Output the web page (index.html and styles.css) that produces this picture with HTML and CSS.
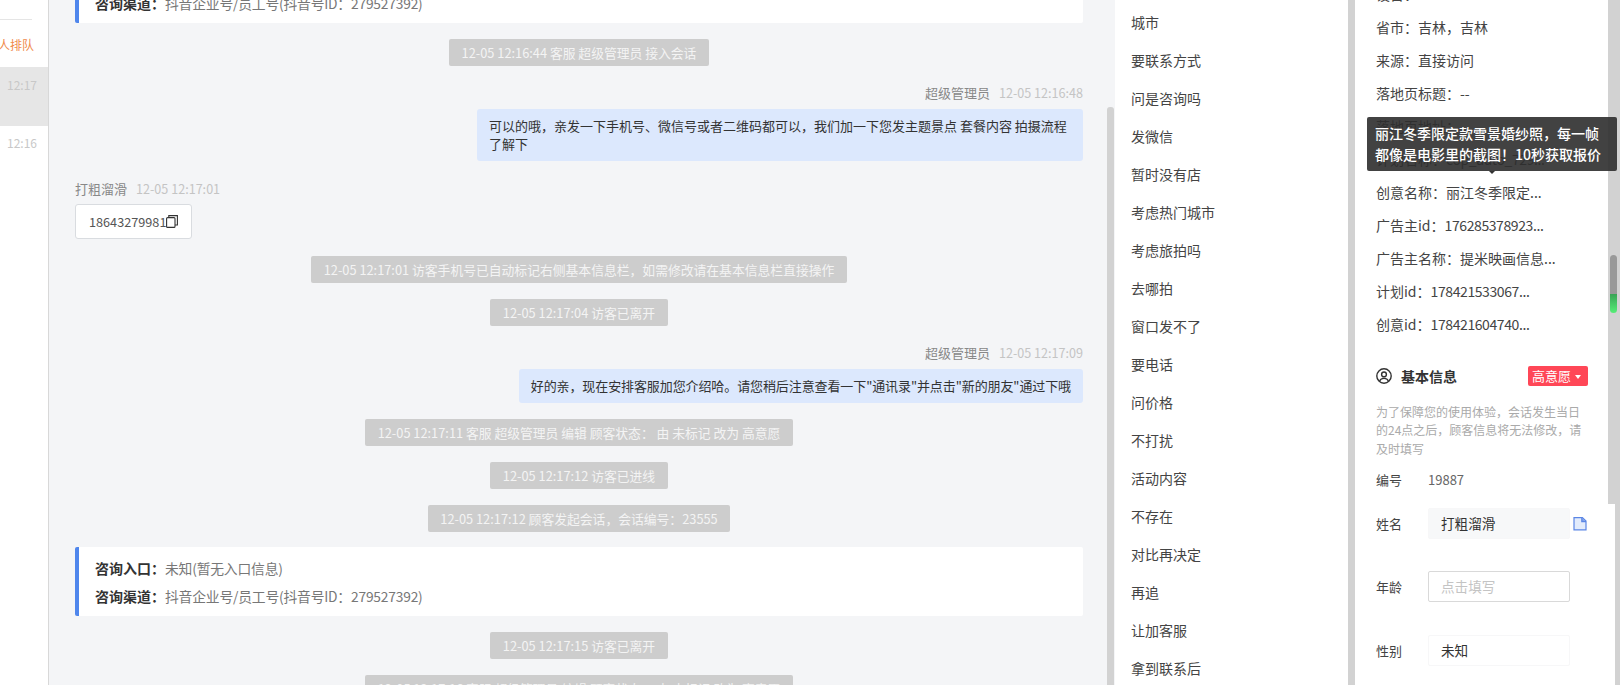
FILE: index.html
```html
<!DOCTYPE html>
<html>
<head>
	<meta charset="utf-8">
	<title>会话</title>
	<link rel="stylesheet" href="styles.css">
</head>
<body>
	<div class="page">
		<aside class="list">
			<div class="list-rule"></div>
			<div class="queue">人排队</div>
			<div class="list-item active">12:17</div>
			<div class="list-item">12:16</div>
		</aside>

		<main class="chat">
			<div class="chat-inner">
				<div class="entry first">
					<p><b>咨询渠道：</b><span>抖音企业号/员工号(抖音号ID：279527392)</span></p>
				</div>
				<div class="sys"><span>12-05 12:16:44 客服 超级管理员 接入会话</span></div>
				<div class="meta right">超级管理员<em>12-05 12:16:48</em></div>
				<div class="row-right"><div class="bubble">可以的哦，亲发一下手机号、微信号或者二维码都可以，我们加一下您发主题景点 套餐内容 拍摄流程了解下</div></div>
				<div class="meta left">打粗溜滑<em>12-05 12:17:01</em></div>
				<div class="phone">18643279981<svg width="12" height="13" viewBox="0 0 12 13" fill="none" stroke="#333" stroke-width="1.1"><rect x="0.6" y="2.6" width="8.4" height="9.8" rx="1"/><path d="M2.800 2.600V0.600h8.600v9.400H9"/></svg></div>
				<div class="sys"><span>12-05 12:17:01 访客手机号已自动标记右侧基本信息栏，如需修改请在基本信息栏直接操作</span></div>
				<div class="sys"><span>12-05 12:17:04 访客已离开</span></div>
				<div class="meta right">超级管理员<em>12-05 12:17:09</em></div>
				<div class="row-right"><div class="bubble tight">好的亲，现在安排客服加您介绍哈。请您稍后注意查看一下"通讯录"并点击"新的朋友"通过下哦</div></div>
				<div class="sys"><span>12-05 12:17:11 客服 超级管理员 编辑 顾客状态： 由 未标记 改为 高意愿</span></div>
				<div class="sys"><span>12-05 12:17:12 访客已进线</span></div>
				<div class="sys"><span>12-05 12:17:12 顾客发起会话，会话编号：23555</span></div>
				<div class="entry">
					<p><b>咨询入口：</b><span>未知(暂无入口信息)</span></p>
					<p><b>咨询渠道：</b><span>抖音企业号/员工号(抖音号ID：279527392)</span></p>
				</div>
				<div class="sys"><span>12-05 12:17:15 访客已离开</span></div>
				<div class="sys"><span>12-05 12:17:16 客服 超级管理员 编辑 顾客状态： 由 未标记 改为 高意愿</span></div>
			</div>
			<div class="chat-bar"></div>
		</main>

		<section class="tags">
			<div>城市</div>
			<div>要联系方式</div>
			<div>问是咨询吗</div>
			<div>发微信</div>
			<div>暂时没有店</div>
			<div>考虑热门城市</div>
			<div>考虑旅拍吗</div>
			<div>去哪拍</div>
			<div>窗口发不了</div>
			<div>要电话</div>
			<div>问价格</div>
			<div>不打扰</div>
			<div>活动内容</div>
			<div>不存在</div>
			<div>对比再决定</div>
			<div>再追</div>
			<div>让加客服</div>
			<div>拿到联系后</div>
		</section>

		<section class="info">
			<div class="info-inner">
				<div class="ad">
					<p>设备：</p>
					<p>省市：吉林，吉林</p>
					<p>来源：直接访问</p>
					<p>落地页标题：--</p>
					<p>落地页地址：</p>
					<p>计划名称：<span class="num">cop_auto_729...</span></p>
					<p>创意名称：丽江冬季限定...</p>
					<p>广告主id：<span class="num">176285378923...</span></p>
					<p>广告主名称：提米映画信息...</p>
					<p>计划id：<span class="num">178421533067...</span></p>
					<p>创意id：<span class="num">178421604740...</span></p>
				</div>
				<div class="base-head">
					<svg width="16" height="16" viewBox="0 0 16 16" fill="none" stroke="#333" stroke-width="1.4"><circle cx="8" cy="8" r="7.2"/><circle cx="8" cy="6.4" r="2.4"/><path d="M3.600 13.100c.8-1.900 2.500-2.700 4.400-2.700s3.600.8 4.400 2.700"/></svg>
					<strong>基本信息</strong>
					<span class="tag-red">高意愿<i></i></span>
				</div>
				<p class="notice">为了保障您的使用体验，会话发生当日的24点之后，顾客信息将无法修改，请及时填写</p>
				<div class="field plain"><label>编号</label><span>19887</span></div>
				<div class="field"><label>姓名</label><div class="box filled">打粗溜滑</div>
					<svg class="copy" width="14" height="15" viewBox="0 0 14 15" fill="#e3ecfc" stroke="#5b86e5" stroke-width="1.2"><path d="M1 1.600h8.400l3.600 3.400v8.800H1z"/><path d="M8.800 1.600v4h4.200" fill="#7fa2ea"/></svg>
				</div>
				<div class="field"><label>年龄</label><div class="box empty">点击填写</div></div>
				<div class="field"><label>性别</label><div class="box sel">未知</div></div>
			</div>
			<div class="track"><div class="thumb"></div></div>
			<div class="tooltip">丽江冬季限定款雪景婚纱照，每一帧都像是电影里的截图！10秒获取报价</div>
		</section>
		<div class="outer-bar"></div>
	</div>
</body>
</html>
```

FILE: styles.css
```css
html, body {
	margin: 0;
	height: 100%;
	overflow: hidden;
}
body {
	font-family: "Noto Sans CJK SC", "Liberation Sans", sans-serif;
	font-size: 13px;
	color: #333;
	background: #fff;
}
p {
	margin: 0;
}
.page {
	display: flex;
	height: 685px;
	overflow: hidden;
}

/* left list */
.list {
	width: 49px;
	flex: none;
	box-sizing: border-box;
	border-right: 1px solid #d8d8d8;
	background: #fff;
}
.list-rule {
	width: 32px;
	height: 1px;
	margin-top: 19px;
	background: #e5e5e5;
}
.queue {
	width: 34px;
	margin-top: 15px;
	height: 32px;
	font-size: 12px;
	line-height: 20px;
	color: #f08a4b;
	overflow: hidden;
	white-space: nowrap;
	direction: rtl;
}
.list-item {
	height: 59px;
	padding: 8px 0 0 7px;
	box-sizing: border-box;
	font-size: 12px;
	line-height: 18px;
	color: #c8c8c8;
}
.list-item.active {
	padding-top: 9px;
	background: #e6e6e6;
}

/* chat */
.chat {
	width: 1066px;
	flex: none;
	display: flex;
	background: #f4f5f7;
}
.chat-inner {
	width: 1008px;
	margin-left: 26px;
	margin-top: -9px;
}
.chat-bar {
	width: 7px;
	margin: 107px 0 0 24px;
	background: #d2d2d2;
	border-radius: 3px 3px 0 0;
}
.entry {
	box-sizing: border-box;
	height: 69px;
	margin-top: 15px;
	padding: 7px 16px;
	background: #fff;
	border-left: 4px solid #4f86ec;
	border-radius: 2px;
	font-size: 14px;
}
.entry p {
	line-height: 28px;
}
.entry.first {
	height: 32px;
	margin-top: 0;
	padding-top: 0;
}
.entry.first p {
	line-height: 24px;
}
.entry b {
	color: #333;
}
.entry span {
	color: #777;
	font-size: 13.8px;
	letter-spacing: -0.2px;
}
.sys {
	display: flex;
	justify-content: center;
	margin-top: 16px;
}
.sys span {
	padding: 0 12.5px;
	height: 27px;
	line-height: 27px;
	font-size: 12.8px;
	color: #f4f4f4;
	background: #cdcdcd;
	border-radius: 2px;
	white-space: nowrap;
}
.meta {
	margin-top: 17px;
	line-height: 20px;
	color: #888;
	font-size: 13px;
}
.meta.left {
	margin-top: 18px;
}
.meta em {
	font-style: normal;
	font-size: 12.6px;
	color: #c4c4c4;
	margin-left: 9px;
}
.meta.right {
	text-align: right;
}
.row-right {
	display: flex;
	justify-content: flex-end;
	margin-top: 6px;
}
.bubble {
	box-sizing: border-box;
	max-width: 606px;
	padding: 7.5px 12px;
	line-height: 18.5px;
	background: #dce8fd;
	border-radius: 3px;
	color: #333;
}
.bubble.tight {
	letter-spacing: -0.1px;
}
.phone {
	box-sizing: border-box;
	display: flex;
	align-items: center;
	width: 117px;
	height: 35px;
	margin: 5px 0 17px;
	padding-left: 13px;
	font-size: 12.7px;
	color: #555;
	background: #fff;
	border: 1px solid #d9dce0;
	border-radius: 3px;
}

/* quick replies */
.tags {
	width: 240px;
	flex: none;
	box-sizing: border-box;
	padding: 3px 0 0 16px;
	background: #fff;
	border-right: 7px solid #d2d2d2;
}
.tags div {
	height: 38px;
	line-height: 38px;
	font-size: 14px;
	color: #444;
}

/* right info column */
.info {
	position: relative;
	width: 260px;
	flex: none;
	display: flex;
}
.info-inner {
	width: 253px;
	box-sizing: border-box;
	padding: 0 20px 0 21px;
}
.ad {
	margin-top: -22.5px;
}
.ad p {
	line-height: 33px;
	font-size: 14px;
	color: #444;
	white-space: nowrap;
}
.num {
	letter-spacing: -0.4px;
}
.base-head {
	display: flex;
	align-items: center;
	margin-top: 23.5px;
	height: 24px;
}
.base-head strong {
	margin-left: 9px;
	font-size: 14px;
	color: #333;
}
.tag-red {
	margin-left: auto;
	width: 60px;
	box-sizing: border-box;
	padding-left: 4px;
	height: 20px;
	line-height: 20px;
	background: #ff4757;
	border-radius: 2px;
	color: #fff;
}
.tag-red i {
	display: inline-block;
	margin-left: 4px;
	vertical-align: 2px;
	border: 3px solid transparent;
	border-top: 4px solid #fff;
	border-bottom: 0;
}
.notice {
	margin-top: 15px;
	font-size: 12px;
	line-height: 18.3px;
	color: #aaa;
}
.field {
	display: flex;
	align-items: center;
	height: 31px;
	margin-bottom: 32.5px;
}
.field.plain {
	height: 20px;
	margin: 12px 0 18px;
}
.field.plain span {
	color: #666;
}
.field label {
	width: 52px;
	flex: none;
	color: #444;
}
.box {
	box-sizing: border-box;
	width: 142px;
	height: 31px;
	line-height: 29px;
	padding-left: 12px;
	border: 1px solid #f7f7f8;
	border-radius: 2px;
	font-size: 13.6px;
	color: #333;
}
.box.filled {
	background: #f7f8f9;
}
.box.empty {
	border-color: #d9d9d9;
	color: #c4c4c4;
}
.copy {
	margin-left: 3px;
}
.track {
	width: 7px;
	height: 504px;
	background: #d2d2d2;
	position: relative;
}
.thumb {
	position: absolute;
	top: 255px;
	left: 2px;
	width: 7px;
	height: 58px;
	border-radius: 4px;
	background: linear-gradient(#999 0, #999 68%, #3aa556 68%, #55ee77 100%);
}
.tooltip {
	position: absolute;
	left: 12px;
	top: 117px;
	box-sizing: border-box;
	width: 250px;
	height: 54px;
	padding: 6px 8px;
	font-size: 14px;
	font-weight: 500;
	line-height: 21px;
	color: #fff;
	background: rgba(45, 45, 45, 0.9);
	border-radius: 2px;
}
.tooltip::after {
	content: "";
	position: absolute;
	left: 122px;
	bottom: -3px;
	border: 3px solid transparent;
	border-top-color: #333;
	border-bottom: 0;
}
.outer-bar {
	flex: 1;
	background: #d2d2d2;
}
```
